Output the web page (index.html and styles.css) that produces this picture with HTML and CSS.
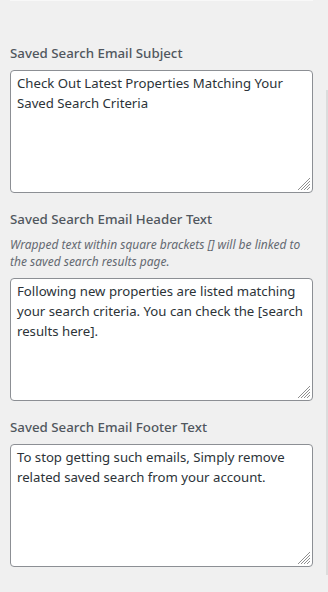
FILE: index.html
```html
<!DOCTYPE html>
<html>
<head>
<meta charset="utf-8">
<link rel="stylesheet" href="styles.css">
</head>
<body>
<div class="page">
  <main class="panel">
    <div class="topstrip"></div>
    <div class="field first">
      <label class="label" for="s1">Saved Search Email Subject</label>
      <div class="boxwrap">
        <textarea id="s1" class="box">Check Out Latest Properties Matching Your Saved Search Criteria</textarea>
        <svg class="grip" width="12" height="12" viewBox="0 0 12 12"><path d="M12 0L0 12M12 3L3 12M12 6L6 12M12 9L9 12" stroke="#8f8f8f" stroke-width="1"/></svg>
      </div>
    </div>
    <div class="field">
      <label class="label" for="s2">Saved Search Email Header Text</label>
      <p class="desc">Wrapped text within square brackets [] will be linked to the saved search results page.</p>
      <div class="boxwrap">
        <textarea id="s2" class="box">Following new properties are listed matching your search criteria. You can check the [search results here].</textarea>
        <svg class="grip" width="12" height="12" viewBox="0 0 12 12"><path d="M12 0L0 12M12 3L3 12M12 6L6 12M12 9L9 12" stroke="#8f8f8f" stroke-width="1"/></svg>
      </div>
    </div>
    <div class="field">
      <label class="label" for="s3">Saved Search Email Footer Text</label>
      <div class="boxwrap">
        <textarea id="s3" class="box">To stop getting such emails, Simply remove related saved search from your account.</textarea>
        <svg class="grip" width="12" height="12" viewBox="0 0 12 12"><path d="M12 0L0 12M12 3L3 12M12 6L6 12M12 9L9 12" stroke="#8f8f8f" stroke-width="1"/></svg>
      </div>
    </div>
  </main>
  <div class="scrolltrack"></div>
</div>
</body>
</html>
```
FILE: styles.css
```css
html, body {
  margin: 0;
  padding: 0;
  background: #f0f0f0;
}
body {
  font-family: "Noto Sans", "Open Sans", sans-serif;
  color: #2c3338;
}
.page {
  display: flex;
  flex-direction: row;
  width: 328px;
  height: 592px;
}
.panel {
  width: 303px;
  margin-left: 10px;
  display: flex;
  flex-direction: column;
}
.topstrip {
  height: 1px;
  background: #f8f8f8;
}
.field {
  display: flex;
  flex-direction: column;
  margin-top: 17px;
}
.field.first {
  margin-top: 43px;
}
.label {
  font-size: 13.3px;
  line-height: 18px;
  color: #50575e;
  font-weight: 500;
  margin-bottom: 8px;
}
.desc {
  margin: 0 0 8px;
  font-size: 12px;
  line-height: 17px;
  font-style: italic;
  color: #646970;
}
.boxwrap {
  position: relative;
  width: 303px;
  height: 123px;
}
.box {
  display: block;
  box-sizing: border-box;
  width: 303px;
  height: 123px;
  margin: 0;
  padding: 2px 0 2px 6px;
  border: 1px solid #8c8f94;
  border-radius: 4px;
  background: #fff;
  font-family: "Noto Sans", "Open Sans", sans-serif;
  font-size: 13.2px;
  line-height: 20px;
  color: #2c3338;
  resize: none;
  overflow: hidden;
}
.grip {
  position: absolute;
  right: 3px;
  bottom: 3px;
}
.scrolltrack {
  width: 2px;
  height: 485px;
  margin-top: 90px;
  margin-left: 13px;
  background: #dcdcdc;
}
```
